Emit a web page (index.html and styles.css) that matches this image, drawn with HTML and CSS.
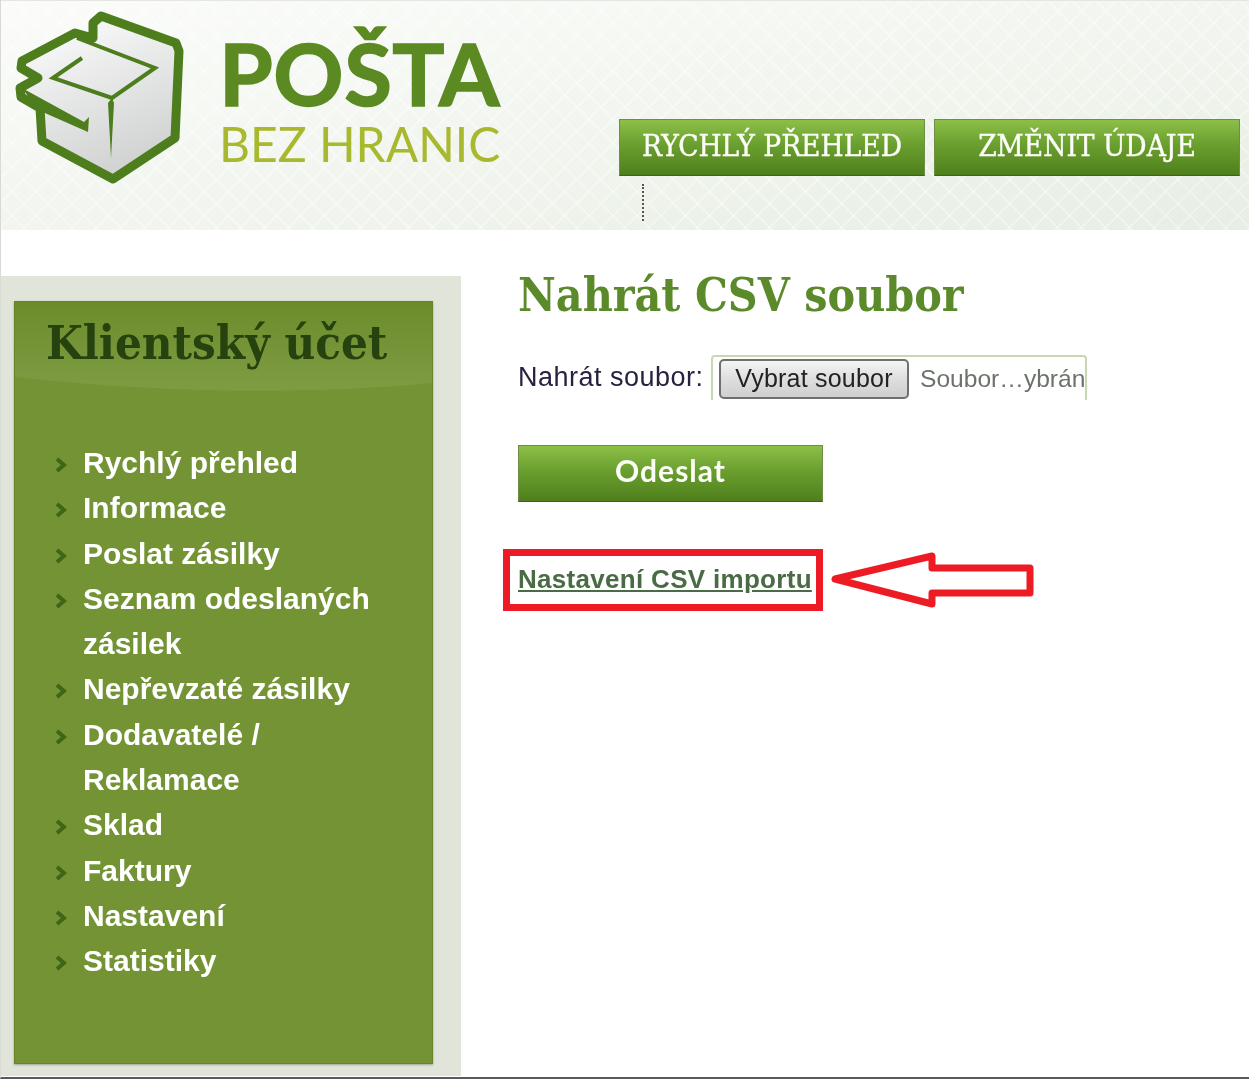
FILE: index.html
```html
<!DOCTYPE html>
<html lang="cs">
<head>
    <meta charset="UTF-8">
    <meta name="viewport" content="width=device-width, initial-scale=1.0">
    <title>Pošta bez hranic</title>
    <link rel="stylesheet" href="styles.css">
</head>
<body>
    <header class="site-header">
        <svg class="logo-box" width="200" height="200" viewBox="0 0 200 200">
            <defs>
                <linearGradient id="boxFill" x1="0" y1="0" x2="0.4" y2="1">
                    <stop offset="0" stop-color="#ffffff"/>
                    <stop offset="1" stop-color="#d2d3d3"/>
                </linearGradient>
            </defs>
            <path d="M93 38 L93 23 L101 16 L176 43 L179 51 L175 138 L113 179 L42 141 L40 108 L21 97 L20 88 L38 78 L21 68 L22 61 L75 33 Z" fill="url(#boxFill)" stroke="#4d7d1c" stroke-width="9" stroke-linejoin="round"/>
            <path d="M77 38 L155 68 L112 98 L53 78 L82 58" fill="none" stroke="#4d7d1c" stroke-width="4"/>
            <path d="M112 98 L114 103 L111 158 L108 103 Z" fill="#4d7d1c"/>
            <path d="M22 88 L84 122 L89 117 L88 132 L38 110 Z" fill="#4d7d1c"/>
        </svg>
        <div class="logo-text">
            <div class="logo-name">POŠTA</div>
            <div class="logo-sub">BEZ HRANIC</div>
        </div>
        <div class="top-nav">
            <div class="top-nav-buttons">
                <a class="green-btn nav-btn" href="#">RYCHLÝ PŘEHLED</a>
                <a class="green-btn nav-btn" href="#">ZMĚNIT ÚDAJE</a>
            </div>
            <div class="nav-dots"></div>
        </div>
    </header>

    <div class="page">
        <aside class="sidebar">
            <div class="account-panel">
                <svg class="panel-wave" width="417" height="92" viewBox="0 0 417 92" preserveAspectRatio="none">
                    <defs>
                        <linearGradient id="waveFill" x1="0" y1="0" x2="0" y2="1">
                            <stop offset="0" stop-color="#6c8c2c"/>
                            <stop offset="1" stop-color="#7f9c42"/>
                        </linearGradient>
                    </defs>
                    <path d="M0 0 H417 V81 C300 92 150 92 0 75 Z" fill="url(#waveFill)"/>
                </svg>
                <h2 class="panel-title">Klientský účet</h2>
                <ul class="side-menu">
                    <li><svg class="chev" width="12" height="16" viewBox="0 0 12 16"><path d="M2 2 L9 8 L2 14"/></svg><a href="#">Rychlý přehled</a></li>
                    <li><svg class="chev" width="12" height="16" viewBox="0 0 12 16"><path d="M2 2 L9 8 L2 14"/></svg><a href="#">Informace</a></li>
                    <li><svg class="chev" width="12" height="16" viewBox="0 0 12 16"><path d="M2 2 L9 8 L2 14"/></svg><a href="#">Poslat zásilky</a></li>
                    <li><svg class="chev" width="12" height="16" viewBox="0 0 12 16"><path d="M2 2 L9 8 L2 14"/></svg><a href="#">Seznam odeslaných zásilek</a></li>
                    <li><svg class="chev" width="12" height="16" viewBox="0 0 12 16"><path d="M2 2 L9 8 L2 14"/></svg><a href="#">Nepřevzaté zásilky</a></li>
                    <li><svg class="chev" width="12" height="16" viewBox="0 0 12 16"><path d="M2 2 L9 8 L2 14"/></svg><a href="#">Dodavatelé / Reklamace</a></li>
                    <li><svg class="chev" width="12" height="16" viewBox="0 0 12 16"><path d="M2 2 L9 8 L2 14"/></svg><a href="#">Sklad</a></li>
                    <li><svg class="chev" width="12" height="16" viewBox="0 0 12 16"><path d="M2 2 L9 8 L2 14"/></svg><a href="#">Faktury</a></li>
                    <li><svg class="chev" width="12" height="16" viewBox="0 0 12 16"><path d="M2 2 L9 8 L2 14"/></svg><a href="#">Nastavení</a></li>
                    <li><svg class="chev" width="12" height="16" viewBox="0 0 12 16"><path d="M2 2 L9 8 L2 14"/></svg><a href="#">Statistiky</a></li>
                </ul>
            </div>
        </aside>

        <main class="content">
            <h1>Nahrát CSV soubor</h1>
            <div class="upload-row">
                <label class="upload-label">Nahrát soubor:</label>
                <div class="file-field">
                    <button class="file-btn" type="button">Vybrat soubor</button>
                    <span class="file-name">Soubor…ybrán</span>
                </div>
            </div>
            <a class="green-btn send-btn" href="#">Odeslat</a>
            <div class="csv-row">
                <div class="red-frame"><a class="csv-link" href="#">Nastavení CSV importu</a></div>
                <svg class="red-arrow" width="204" height="58" viewBox="0 0 204 58">
                    <path d="M5 28 L102 5 L102 17 L200 17 L200 42 L102 42 L102 53 Z" fill="#fff" stroke="#ed1c24" stroke-width="7" stroke-linejoin="round"/>
                </svg>
            </div>
        </main>
    </div>
</body>
</html>
```

FILE: styles.css
```css
html, body {
    height: 100%;
}
body {
    margin: 0;
    height: 1079px;
    box-sizing: border-box;
    overflow: hidden;
    background: #fff;
    border-left: 1px solid #d8dbd4;
    border-bottom: 2px solid #5a5a5a;
    font-family: "Liberation Sans", Arial, sans-serif;
    color: #2a2140;
}
a {
    text-decoration: none;
}

/* the reference is a scaled up screenshot, so everything is a little soft */
.site-header,
.page {
    filter: blur(0.5px);
}

/* header */
.site-header {
    display: flex;
    height: 230px;
    box-sizing: border-box;
    background-color: #f3f6f0;
    background-image:
        repeating-linear-gradient(45deg, rgba(255, 255, 255, 0.35) 0 2px, transparent 2px 17px),
        repeating-linear-gradient(-45deg, rgba(255, 255, 255, 0.35) 0 2px, transparent 2px 17px),
        linear-gradient(170deg, #fbfcfa 0%, #f1f5ee 55%, #e8eee3 100%);
    border-top: 1px solid #e4e6e2;
}
.logo-box {
    flex: none;
    margin-top: -1px;
    margin-left: -1px;
}
.logo-text {
    flex: none;
    width: 400px;
    margin-left: 19px;
    padding-top: 27px;
}
.logo-name {
    font-family: Lato, sans-serif;
    font-weight: 700;
    font-size: 87px;
    line-height: 90px;
    letter-spacing: 0.5px;
    color: #5c8a22;
    -webkit-text-stroke: 1.5px #5c8a22;
}
.logo-sub {
    font-family: Lato, sans-serif;
    font-weight: 400;
    font-size: 48px;
    line-height: 48px;
    margin-top: 2px;
    color: #a9b92f;
}
.top-nav {
    padding-top: 118px;
}
.top-nav-buttons {
    display: flex;
    gap: 9px;
}
.green-btn {
    display: block;
    box-sizing: border-box;
    text-align: center;
    color: #fbfdf6;
    background: linear-gradient(#8dbf48, #6a9f2f 45%, #4f7f1c);
    border: 1px solid #6d8f45;
    border-bottom-color: #3f6316;
}
.nav-btn {
    width: 306px;
    height: 57px;
    line-height: 52px;
    font-family: "DejaVu Serif Condensed", "DejaVu Serif", serif;
    font-size: 29.5px;
    -webkit-text-stroke: 0.4px #fbfdf6;
}
.nav-dots {
    height: 37px;
    width: 0;
    margin-top: 8px;
    margin-left: 23px;
    border-left: 2px dotted #555;
}

/* two columns below the header */
.page {
    display: flex;
    height: 846px;
    padding-top: 46px;
    box-sizing: border-box;
}
.sidebar {
    flex: none;
    width: 460px;
    box-sizing: border-box;
    padding: 25px 28px 12px 13px;
    background: #e1e5d9;
}
.account-panel {
    position: relative;
    height: 100%;
    box-sizing: border-box;
    background: #749335;
    border: 1px solid #66852a;
    box-shadow: 0 1px 2px rgba(90, 100, 70, 0.5);
}
.panel-wave {
    position: absolute;
    top: 0;
    left: 0;
}
.panel-title {
    position: relative;
    margin: 0;
    padding: 14px 0 0 31px;
    font-family: "DejaVu Serif Condensed", "DejaVu Serif", serif;
    font-weight: 700;
    font-size: 47px;
    line-height: 54px;
    color: #26420e;
}
.side-menu {
    position: relative;
    list-style: none;
    margin: 0;
    padding: 70px 30px 0 40px;
}
.side-menu li {
    display: flex;
    line-height: 45.3px;
}
.side-menu a {
    color: #fff;
    font-family: "Liberation Sans", sans-serif;
    font-weight: 700;
    font-size: 30px;
}
.chev {
    flex: none;
    margin: 17px 16px 0 0;
}
.chev path {
    fill: none;
    stroke: #3f6616;
    stroke-width: 4;
}

/* main column */
.content {
    flex: 1;
    padding: 0 0 0 57px;
}
.content h1 {
    margin: -8px 0 0;
    font-family: "DejaVu Serif Condensed", "DejaVu Serif", serif;
    font-weight: 700;
    font-size: 46px;
    line-height: 54px;
    color: #5a8a2a;
}
.upload-row {
    display: flex;
    align-items: center;
    margin-top: 33px;
}
.upload-label {
    font-size: 27px;
    letter-spacing: 0.5px;
    width: 193px;
    flex: none;
}
.file-field {
    display: flex;
    align-items: center;
    gap: 11px;
    width: 376px;
    height: 45px;
    box-sizing: border-box;
    padding-left: 6px;
    overflow: hidden;
    white-space: nowrap;
    border: 2px solid #c9d8b4;
    border-bottom: 0;
    border-radius: 4px 4px 0 0;
}
.file-btn {
    flex: none;
    width: 190px;
    height: 40px;
    padding: 0;
    font-family: "Liberation Sans", sans-serif;
    font-size: 25px;
    letter-spacing: 0.2px;
    color: #222;
    background: linear-gradient(#f4f4f4, #dedede 50%, #cfcfcf);
    border: 2px solid #6f6f6f;
    border-radius: 5px;
}
.file-name {
    font-size: 24.6px;
    color: #6b736b;
}
.send-btn {
    width: 305px;
    height: 57px;
    margin-top: 45px;
    font-family: Lato, sans-serif;
    font-weight: 700;
    font-size: 30px;
    letter-spacing: 1px;
    line-height: 49px;
}
.csv-row {
    display: flex;
    align-items: center;
    gap: 7px;
    margin: 47px 0 0 -15px;
}
.red-frame {
    width: 320px;
    height: 62px;
    box-sizing: border-box;
    border: 7px solid #ed1c24;
    padding: 0 0 0 8px;
    line-height: 46px;
}
.csv-link {
    font-family: "Liberation Sans", sans-serif;
    font-weight: 700;
    font-size: 26px;
    letter-spacing: 0.3px;
    color: #4a6b45;
    text-decoration: underline;
    white-space: nowrap;
}
.red-arrow {
    flex: none;
}
```
